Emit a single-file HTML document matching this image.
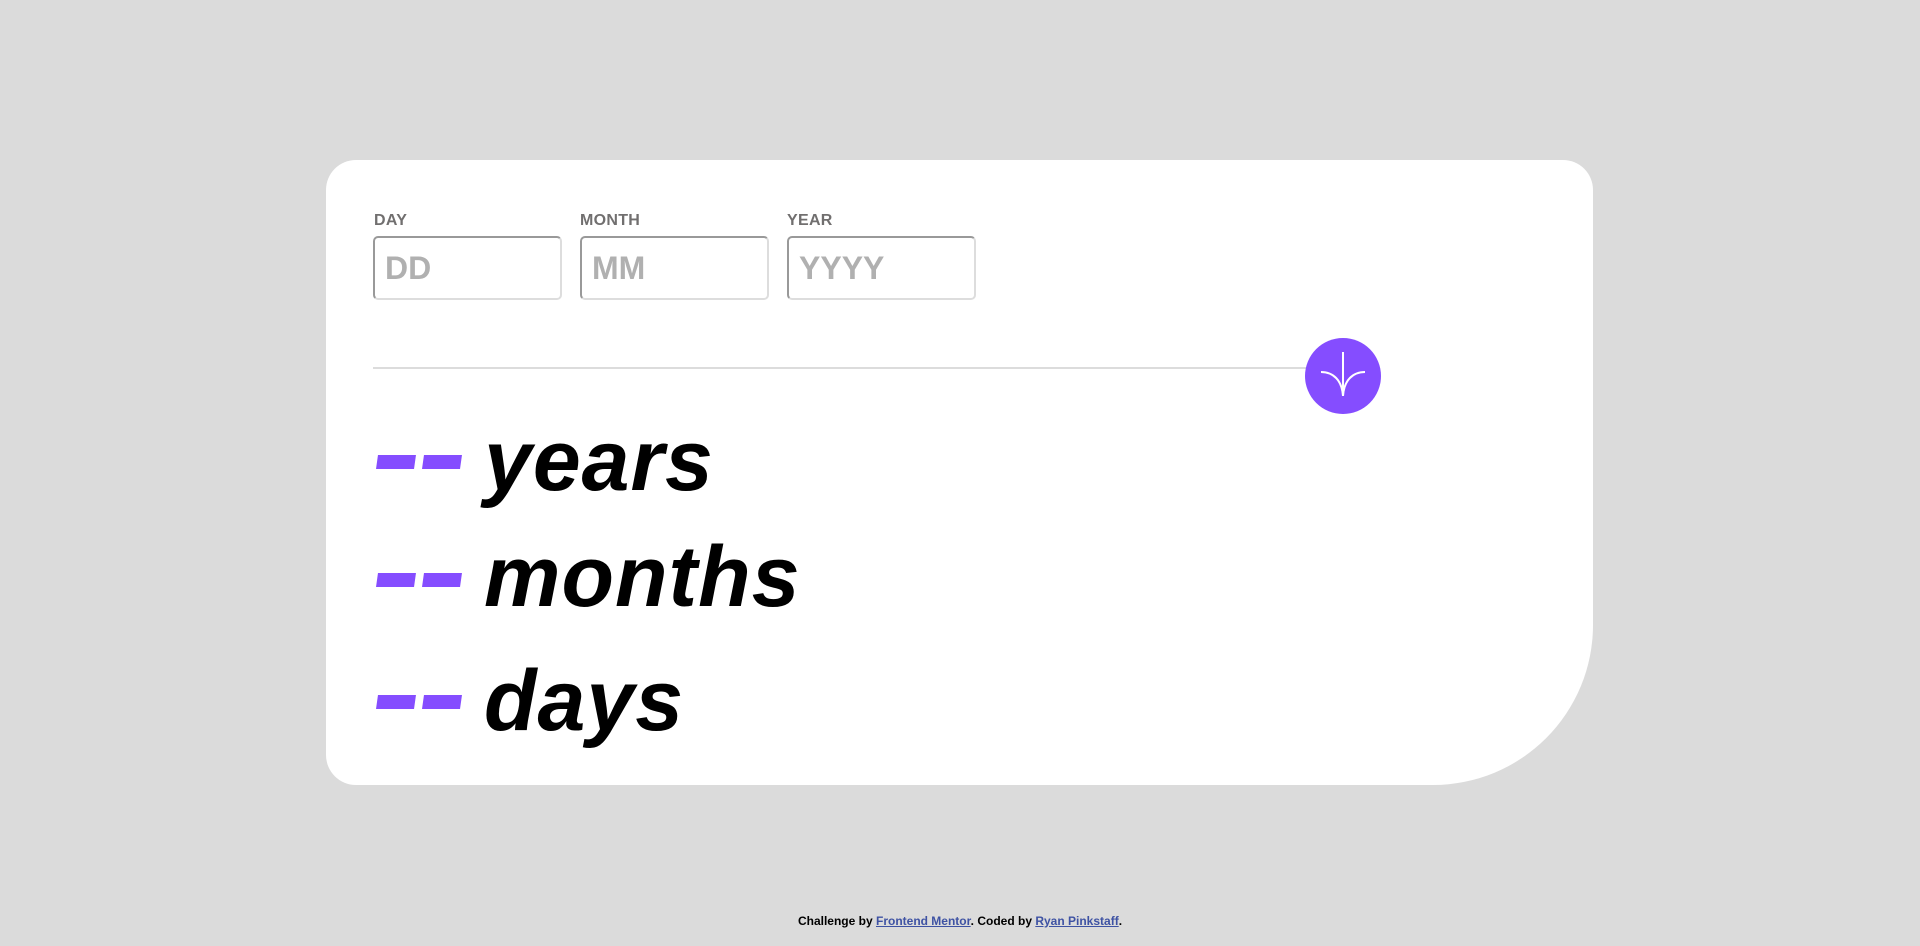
<!DOCTYPE html>
<html><head><meta charset="utf-8"><style>
html,body{margin:0;padding:0;width:1920px;height:946px;background:#dbdbdb;font-family:"Liberation Sans",sans-serif;overflow:hidden;position:relative}
.card{position:absolute;left:326px;top:160px;width:1267px;height:625px;background:#fff;border-radius:30px 30px 160px 30px}
.lab{position:absolute;top:212px;font-size:16px;font-weight:bold;color:#716f6f;letter-spacing:0.3px}
.inp{position:absolute;top:236px;width:175px;height:60px;border:2px solid #ddd;border-top-color:#999;border-left-color:#999;border-radius:5px;font-size:32px;font-weight:bold;color:#b0b0b0;line-height:60px;padding-left:10px;box-sizing:content-box}
.line{position:absolute;left:373px;top:367px;width:940px;height:2px;background:#dcdcdc}
.btn{position:absolute;left:1305px;top:338px;width:76px;height:76px;border-radius:50%;background:#854dff}
.row{position:absolute;left:484px;font-size:86px;font-weight:bold;font-style:italic;letter-spacing:1px;color:#000;line-height:1}
.dash{position:absolute;width:38px;height:14px;background:#854dff;transform:skewX(-8deg)}
.foot{position:absolute;top:914px;left:0;width:1920px;text-align:center;font-size:12px;font-weight:bold;color:#000}
.foot a{color:#3e52a3;text-decoration:underline}
</style></head><body>
<div class="card"></div>
<div class="lab" style="left:374px">DAY</div>
<div class="lab" style="left:580px">MONTH</div>
<div class="lab" style="left:787px">YEAR</div>
<div class="inp" style="left:373px">DD</div>
<div class="inp" style="left:580px">MM</div>
<div class="inp" style="left:787px">YYYY</div>
<div class="line"></div>
<div class="btn"><svg width="76" height="76" viewBox="0 0 76 76"><g fill="none" stroke="#fff" stroke-width="2"><path d="M38 14V58"/><path d="M16 34C28 34 37 42 38 58C39 42 48 34 60 34"/></g></svg></div>

<div class="dash" style="left:377px;top:455px"></div><div class="dash" style="left:423px;top:455px"></div>
<div class="row" style="top:418px">years</div>
<div class="dash" style="left:377px;top:573px"></div><div class="dash" style="left:423px;top:573px"></div>
<div class="row" style="top:534px">months</div>
<div class="dash" style="left:377px;top:695px"></div><div class="dash" style="left:423px;top:695px"></div>
<div class="row" style="top:658px">days</div>

<div class="foot">Challenge by <a>Frontend Mentor</a>. Coded by <a>Ryan Pinkstaff</a>.</div>
</body></html>
